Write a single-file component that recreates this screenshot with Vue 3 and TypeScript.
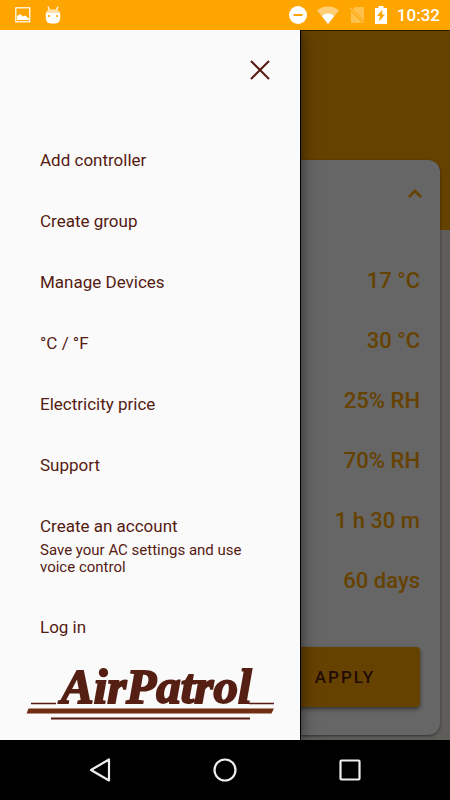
<script setup lang="ts">
interface MenuItem {
  label: string
  note?: string
}

const menu: MenuItem[] = [
  { label: 'Add controller' },
  { label: 'Create group' },
  { label: 'Manage Devices' },
  { label: '°C / °F' },
  { label: 'Electricity price' },
  { label: 'Support' },
  { label: 'Create an account', note: 'Save your AC settings and use voice control' },
  { label: 'Log in' },
]

const settings: string[] = ['17 °C', '30 °C', '25% RH', '70% RH', '1 h 30 m', '60 days']
</script>

<template>
  <div class="screen">
    <header class="status">
      <div class="status-group left">
        <svg width="16" height="16" viewBox="0 0 16 16" aria-hidden="true">
          <rect x="0.8" y="0.8" width="14" height="14" fill="none" stroke="#fff" stroke-width="1.2" />
          <path d="M2 13V9l3-2 3 2.500 2-1 4 3V13z" fill="#fff" />
        </svg>
        <svg width="16" height="18" viewBox="0 0 16 18" aria-hidden="true">
          <path d="M3 0.500 4.500 4M13 0.500 11.500 4" stroke="#fff" stroke-width="1.300" />
          <path d="M1 6.500C2 4 4 3.500 8 3.500s6 .5 7 3z" fill="#ffe2ae" />
          <path d="M1 6.500h14c.7 4 .3 8-1.500 10-1.500 1.300-9.500 1.300-11 0C.7 14.500.3 10.500 1 6.500z" fill="#fff" />
          <path d="M3 9h2v2H3zM11 9h2v2h-2z" fill="#ffb52e" />
        </svg>
      </div>
      <div class="status-group right">
        <svg width="18" height="18" viewBox="0 0 18 18" aria-hidden="true">
          <circle cx="9" cy="9" r="9" fill="#fff" />
          <path d="M4.500 9h9" stroke="#ffa500" stroke-width="2" />
        </svg>
        <svg width="22" height="18" viewBox="0 0 22 18" aria-hidden="true">
          <path d="M0 4.500C6-.8 16-.8 22 4.500L11 18z" fill="#ffcf78" />
          <path d="M4.800 10C8 6.700 14 6.700 17.200 10L11 18z" fill="#fff" />
        </svg>
        <svg width="16" height="18" viewBox="0 0 16 18" aria-hidden="true">
          <path d="M6 1h8a1 1 0 0 1 1 1v12L4 3zM2 5.500 13.500 17H3a1 1 0 0 1-1-1z" fill="#ffc14d" />
          <path d="M.5 1.500 15.500 16.500" stroke="#ffc14d" stroke-width="1.300" />
        </svg>
        <svg width="12" height="18" viewBox="0 0 12 18" aria-hidden="true">
          <path d="M3.500 0h5v2H12v16H0V2h3.500z" fill="#fff" />
          <path d="M7.500 3.500 2 10H5L4 15.500 10 8.500H7z" fill="#ffa500" />
        </svg>
        <time class="clock">10:32</time>
      </div>
    </header>

    <main class="stage">
      <section class="page">
        <div class="card">
          <button class="collapse" type="button" aria-label="Collapse">
            <svg width="14" height="9" viewBox="0 0 14 9" aria-hidden="true">
              <path d="M1 8 7 2l6 6" fill="none" stroke="currentColor" stroke-width="2.800" />
            </svg>
          </button>
          <ul class="values">
            <li v-for="value in settings" :key="value">{{ value }}</li>
          </ul>
          <button class="apply" type="button">APPLY</button>
        </div>
      </section>

      <div class="scrim"></div>

      <aside class="drawer">
        <button class="close" type="button" aria-label="Close menu">
          <svg width="20" height="20" viewBox="0 0 20 20" aria-hidden="true">
            <path d="M1 1 19 19M19 1 1 19" fill="none" stroke="currentColor" stroke-width="2" />
          </svg>
        </button>
        <nav>
          <ul class="menu">
            <li v-for="item in menu" :key="item.label">
              <a href="#">
                <span class="label">{{ item.label }}</span>
                <span v-if="item.note" class="note">{{ item.note }}</span>
              </a>
            </li>
          </ul>
        </nav>
        <svg class="logo" viewBox="0 0 250 58" role="img" aria-label="AirPatrol">
          <path d="M6 41.500h25M224 41.500h25" stroke="#551b12" stroke-width="1.600" />
          <path d="M3.500 46.500H249l-2.500 5H1.500z" fill="#702d12" />
          <path d="M26 56.500H225" stroke="#551b12" stroke-width="1.800" />
          <text class="wordmark" x="36" y="41">AirPatrol</text>
        </svg>
      </aside>
    </main>

    <footer class="navbar">
      <button type="button" aria-label="Back">
        <svg width="24" height="24" viewBox="0 0 24 24" aria-hidden="true">
          <path d="M21 1.500v21L3 12z" fill="none" stroke="#eee" stroke-width="2.200" stroke-linejoin="round" />
        </svg>
      </button>
      <button type="button" aria-label="Home">
        <svg width="24" height="24" viewBox="0 0 24 24" aria-hidden="true">
          <circle cx="12" cy="12" r="10.500" fill="none" stroke="#eee" stroke-width="2.200" />
        </svg>
      </button>
      <button type="button" aria-label="Recent apps">
        <svg width="24" height="24" viewBox="0 0 24 24" aria-hidden="true">
          <rect x="2.500" y="2.500" width="19" height="19" rx="1" fill="none" stroke="#eee" stroke-width="2.200" />
        </svg>
      </button>
    </footer>
  </div>
</template>

<style>
body {
  margin: 0;
  background: #000;
}
</style>

<style scoped>
.screen {
  display: flex;
  flex-direction: column;
  min-height: 100vh;
  font-family: Roboto, "Liberation Sans", sans-serif;
}

button {
  padding: 0;
  border: 0;
  background: none;
  font-family: inherit;
}

svg {
  display: block;
}

ul {
  margin: 0;
  padding: 0;
  list-style: none;
}

.status {
  display: flex;
  justify-content: space-between;
  align-items: center;
  height: 30px;
  padding: 0 10px 0 15px;
  background: #ffa500;
  color: #fff;
}

.status-group {
  display: flex;
  align-items: center;
}

.left {
  gap: 14px;
}

.right {
  gap: 10px;
}

.clock {
  font-size: 17px;
  font-weight: 500;
  line-height: 24px;
}

.stage {
  position: relative;
  display: flex;
  flex: 1;
  overflow: hidden;
}

.page {
  display: flex;
  flex: 1;
  padding: 130px 10px 5px;
  background: linear-gradient(#ffa500 200px, #ece8e0 200px);
}

.card {
  display: flex;
  flex: 1;
  flex-direction: column;
  padding: 0 20px 28px;
  border-radius: 12px;
  background: #fff;
  box-shadow: 0 1px 3px rgba(0, 0, 0, 0.5);
}

.collapse {
  align-self: flex-end;
  margin: 29px -2px 0 0;
  color: #ffa500;
}

.values {
  padding-top: 53px;
  color: #ffa500;
  font-size: 22px;
  font-weight: 500;
  line-height: 60px;
  text-align: right;
}

.apply {
  height: 60px;
  margin-top: auto;
  padding-left: 240px;
  border-radius: 4px;
  background: #ffa500;
  box-shadow: 0 2px 4px rgba(0, 0, 0, 0.5);
  color: #551b12;
  font-size: 17px;
  font-weight: 500;
  letter-spacing: 2px;
}

.scrim {
  position: absolute;
  inset: 0;
  border-top: 1px solid #2b1c02;
  background: rgba(0, 0, 0, 0.6);
}

.drawer {
  position: absolute;
  inset: 0 auto 0 0;
  display: flex;
  flex-direction: column;
  box-sizing: border-box;
  width: calc(100% * 2 / 3);
  padding: 30px 25px 20px;
  background: #fafafa;
  box-shadow: 1px 0 0 #000, 2px 0 14px rgba(0, 0, 0, 0.5);
  color: #551b12;
}

.close {
  align-self: flex-end;
  margin-right: 5px;
  color: #551b12;
}

.menu {
  display: flex;
  flex-direction: column;
  gap: 41px;
  padding: 70px 15px 0;
}

.menu a {
  display: block;
  color: inherit;
  text-decoration: none;
}

.label,
.note {
  display: block;
}

.label {
  font-size: 17px;
  line-height: 20px;
}

.note {
  padding-top: 6px;
  font-size: 15px;
  line-height: 17px;
}

.logo {
  width: 100%;
  margin-top: auto;
  overflow: visible;
}

.wordmark {
  fill: #551f13;
  stroke: #551f13;
  stroke-width: 2px;
  font-family: "Liberation Serif", serif;
  font-size: 49px;
  font-style: italic;
  font-weight: 700;
}

.navbar {
  display: flex;
  justify-content: space-between;
  align-items: center;
  height: 60px;
  padding: 0 88px;
  background: #000;
}
</style>
